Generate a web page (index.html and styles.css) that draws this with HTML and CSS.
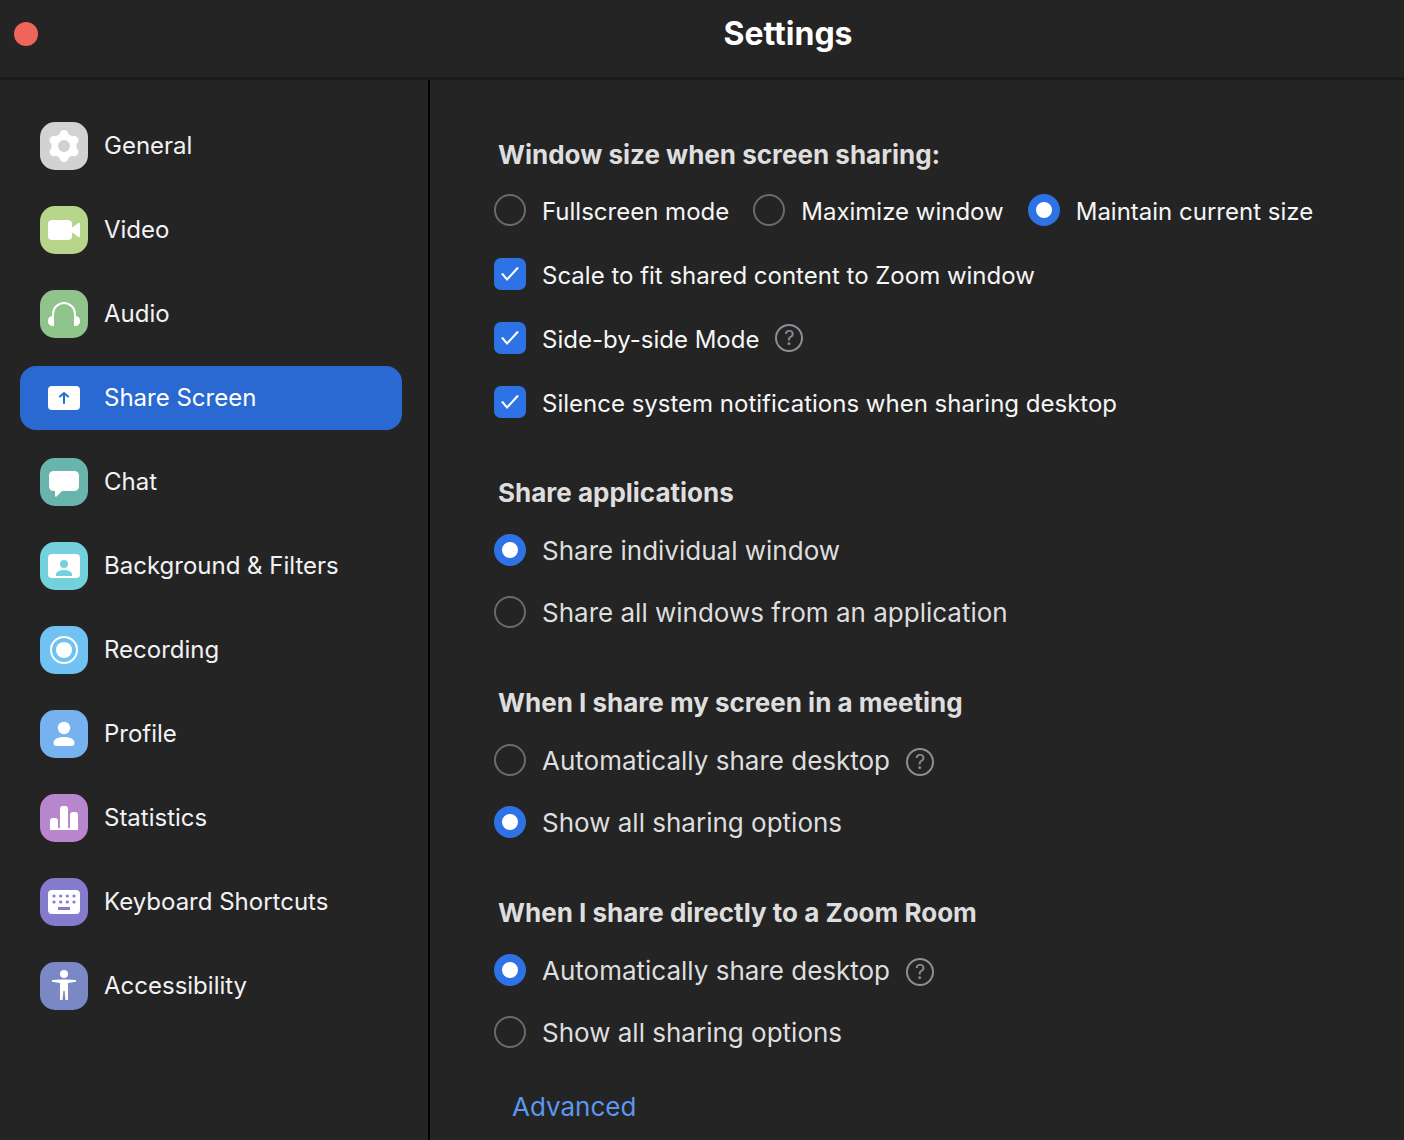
FILE: index.html
```html
<!DOCTYPE html>
<html lang="en">
<head>
<meta charset="utf-8">
<meta name="viewport" content="width=device-width, initial-scale=1">
<title>Settings</title>
<link rel="stylesheet" href="styles.css">
</head>
<body>
<header class="titlebar">
  <button class="close" type="button" aria-label="Close"></button>
  <h1 class="title">Settings</h1>
</header>
<div class="body">
  <nav class="sidebar" aria-label="Settings sections">
    <a class="nav-item" href="#general">
      <svg class="nav-icon general" viewBox="0 0 48 48" aria-hidden="true"><path fill="none" stroke="#fff" stroke-width="9" stroke-linecap="round" stroke-linejoin="round" d="M24 12.500V35.500M14 18.300L34 29.700M14 29.700L34 18.300"/><circle cx="24" cy="24" r="12.500" fill="#fff"/><circle cx="24" cy="24" r="6" fill="#d2d2d2"/></svg>
      <span>General</span>
    </a>
    <a class="nav-item" href="#video">
      <svg class="nav-icon video" viewBox="0 0 48 48" aria-hidden="true"><rect x="8" y="14" width="24" height="20" rx="4"/><path d="M32 21.500L38.500 17Q40 16.200 40 17.800V30.200Q40 31.800 38.500 31L32 26.500Z"/></svg>
      <span>Video</span>
    </a>
    <a class="nav-item" href="#audio">
      <svg class="nav-icon audio" viewBox="0 0 48 48" aria-hidden="true"><path fill="none" stroke="#fff" stroke-width="2" d="M13 28V24a11 11 0 0 1 22 0V28"/><path d="M14 26V36H12.500A4.500 4.500 0 0 1 8 31.500V30.500A4.500 4.500 0 0 1 12.500 26ZM34 26V36H35.500A4.500 4.500 0 0 0 40 31.500V30.500A4.500 4.500 0 0 0 35.500 26Z"/></svg>
      <span>Audio</span>
    </a>
    <a class="nav-item selected" href="#share-screen" aria-current="page">
      <svg class="nav-icon" viewBox="0 0 48 48" aria-hidden="true"><rect x="8" y="12" width="32" height="24" rx="4"/><path fill="none" stroke="#2a69d2" stroke-width="2" stroke-linecap="round" stroke-linejoin="round" d="M24 29V19M20 22.500L24 19L28 22.500"/></svg>
      <span>Share Screen</span>
    </a>
    <a class="nav-item" href="#chat">
      <svg class="nav-icon chat" viewBox="0 0 48 48" aria-hidden="true"><path d="M14 13H34Q39 13 39 18V28Q39 33 34 33H22L16.500 38.500Q15 39.500 15 37.500V33H14Q9 33 9 28V18Q9 13 14 13Z"/></svg>
      <span>Chat</span>
    </a>
    <a class="nav-item" href="#background">
      <svg class="nav-icon background" viewBox="0 0 48 48" aria-hidden="true"><rect x="8" y="12" width="32" height="24" rx="4"/><circle cx="24" cy="22" r="4" fill="#73d1de"/><path fill="#73d1de" d="M16 34V32.500C16 29.500 20 28 24 28S32 29.500 32 32.500V34Z"/></svg>
      <span>Background &amp; Filters</span>
    </a>
    <a class="nav-item" href="#recording">
      <svg class="nav-icon recording" viewBox="0 0 48 48" aria-hidden="true"><circle cx="24" cy="24" r="13" fill="none" stroke="#fff" stroke-width="2"/><circle cx="24" cy="24" r="8"/></svg>
      <span>Recording</span>
    </a>
    <a class="nav-item" href="#profile">
      <svg class="nav-icon profile" viewBox="0 0 48 48" aria-hidden="true"><circle cx="24" cy="18" r="6.200"/><path d="M13.500 33C13.500 29 18 27 24 27S34.500 29 34.500 33Q34.500 36 31.500 36H16.500Q13.500 36 13.500 33Z"/></svg>
      <span>Profile</span>
    </a>
    <a class="nav-item" href="#statistics">
      <svg class="nav-icon statistics" viewBox="0 0 48 48" aria-hidden="true"><path d="M10 36V27Q10 24 13 24H15Q18 24 18 27V34H20V15Q20 12 23 12H25Q28 12 28 15V34H30V21Q30 18 33 18H35Q38 18 38 21V36Z"/></svg>
      <span>Statistics</span>
    </a>
    <a class="nav-item" href="#shortcuts">
      <svg class="nav-icon shortcuts" viewBox="0 0 48 48" aria-hidden="true"><rect x="8" y="12" width="32" height="24" rx="4"/><path fill="none" stroke="#857bcd" stroke-width="3.200" stroke-linecap="round" d="M14 18h.01M20.700 18h.01M27.300 18h.01M34 18h.01M14 24h.01M20.700 24h.01M27.300 24h.01M34 24h.01"/><rect x="18" y="29" width="12" height="3" fill="#857bcd"/></svg>
      <span>Keyboard Shortcuts</span>
    </a>
    <a class="nav-item" href="#accessibility">
      <svg class="nav-icon accessibility" viewBox="0 0 48 48" aria-hidden="true"><circle cx="24" cy="12" r="4"/><path d="M12 18L22 17.500H26L36 18V19.700L28 21V38H25.500L24.600 29H23.400L22.500 38H20V21L12 19.700Z"/></svg>
      <span>Accessibility</span>
    </a>
  </nav>
  <main class="content">
    <section class="group primary">
      <h2 class="heading">Window size when screen sharing:</h2>
      <div class="options">
        <div class="choices">
          <label class="option"><input class="radio" type="radio" name="size"><span>Fullscreen mode</span></label>
          <label class="option"><input class="radio" type="radio" name="size"><span>Maximize window</span></label>
          <label class="option"><input class="radio" type="radio" name="size" checked><span>Maintain current size</span></label>
        </div>
        <label class="option"><input class="check" type="checkbox" checked><span>Scale to fit shared content to Zoom window</span></label>
        <div class="row">
          <label class="option"><input class="check" type="checkbox" checked><span>Side-by-side Mode</span></label>
          <button class="help" type="button" aria-label="About side-by-side mode">?</button>
        </div>
        <label class="option"><input class="check" type="checkbox" checked><span>Silence system notifications when sharing desktop</span></label>
      </div>
    </section>
    <section class="group">
      <h2 class="heading">Share applications</h2>
      <div class="options">
        <label class="option"><input class="radio" type="radio" name="apps" checked><span>Share individual window</span></label>
        <label class="option"><input class="radio" type="radio" name="apps"><span>Share all windows from an application</span></label>
      </div>
    </section>
    <section class="group">
      <h2 class="heading">When I share my screen in a meeting</h2>
      <div class="options">
        <div class="row">
          <label class="option"><input class="radio" type="radio" name="meeting"><span>Automatically share desktop</span></label>
          <button class="help" type="button" aria-label="About sharing in a meeting">?</button>
        </div>
        <label class="option"><input class="radio" type="radio" name="meeting" checked><span>Show all sharing options</span></label>
      </div>
    </section>
    <section class="group">
      <h2 class="heading">When I share directly to a Zoom Room</h2>
      <div class="options">
        <div class="row">
          <label class="option"><input class="radio" type="radio" name="room" checked><span>Automatically share desktop</span></label>
          <button class="help" type="button" aria-label="About sharing to a Zoom Room">?</button>
        </div>
        <label class="option"><input class="radio" type="radio" name="room"><span>Show all sharing options</span></label>
      </div>
    </section>
    <a class="advanced" href="#advanced">Advanced</a>
  </main>
</div>
</body>
</html>
```
FILE: styles.css
```css
* { box-sizing: border-box; }

body {
  margin: 0;
  min-height: 100vh;
  display: flex;
  flex-direction: column;
  background: #242424;
  color: #f4f4f4;
  font-family: Inter, "Liberation Sans", sans-serif;
  font-size: 24px;
  line-height: 32px;
}

.titlebar {
  display: grid;
  grid-template-columns: 172px 1fr;
  align-items: center;
  padding: 0 0 9px 0;
  height: 80px;
  border-bottom: 3px solid #1b1b1b;
}

.close {
  width: 24px;
  height: 24px;
  margin-left: 14px;
  padding: 0;
  border: 0;
  border-radius: 50%;
  background: #ee6559;
}

.title {
  margin: 0;
  text-align: center;
  font-size: 32px;
  line-height: 40px;
  font-weight: 700;
  color: #fff;
}

.body {
  flex: 1;
  display: flex;
}

.sidebar {
  flex: 0 0 430px;
  display: flex;
  flex-direction: column;
  gap: 20px;
  padding: 34px 26px 34px 20px;
  border-right: 2px solid #000;
}

.nav-item {
  display: flex;
  align-items: center;
  gap: 16px;
  height: 64px;
  padding: 0 20px;
  border-radius: 16px;
  color: #f2f2f4;
  text-decoration: none;
}

.selected { background: #2a69d2; color: #fff; }

.nav-icon {
  flex: none;
  width: 48px;
  height: 48px;
  border-radius: 15px;
  fill: #fff;
}

.general { background: #d2d2d2; }
.video { background: #b7d68c; }
.audio { background: #90c48c; }
.chat { background: #6ab4ae; }
.background { background: #73d1de; }
.recording { background: #71c2f3; }
.profile { background: #76b2f0; }
.statistics { background: #b886cd; }
.shortcuts { background: #857bcd; }
.accessibility { background: #7a88c6; }

.content {
  flex: 1;
  min-width: 0;
  display: flex;
  flex-direction: column;
  gap: 59px;
  padding: 59px 24px 0 64px;
}

.group {
  display: flex;
  flex-direction: column;
  gap: 25px;
  font-size: 26px;
  color: #dedede;
}

.options {
  display: flex;
  flex-direction: column;
  align-items: flex-start;
  gap: 30px;
}

.primary { gap: 23px; font-size: 24px; color: #f6f6f6; }
.primary .options { gap: 32px; }

.heading {
  margin: 0 0 0 4px;
  font-size: 26px;
  line-height: 32px;
  font-weight: 700;
  color: #dedede;
}

.choices { display: flex; flex-wrap: wrap; gap: 24px; }
.row { display: flex; align-items: center; gap: 16px; }
.option { display: flex; align-items: center; gap: 16px; }
.option span { padding-top: 2px; line-height: 30px; }
.primary .option span { padding-top: 4px; line-height: 28px; }

.radio, .check {
  appearance: none;
  flex: none;
  width: 32px;
  height: 32px;
  margin: 0;
}

.radio { border: 2px solid #6b6b6b; border-radius: 50%; }
.radio:checked { border: 8px solid #2e73e6; background: #fff; }

.check {
  display: grid;
  place-items: center;
  border-radius: 7px;
  background: #2e73e6;
}

.check:checked::before {
  content: "";
  width: 20px;
  height: 16px;
  background: #fff;
  clip-path: polygon(1px 8px, 3px 7px, 7px 12px, 17px 1px, 19px 2px, 7px 15px);
}

.help {
  width: 28px;
  height: 28px;
  margin-top: 4px;
  padding: 0;
  border: 2px solid #8f8c96;
  border-radius: 50%;
  background: none;
  color: #8f8c96;
  font-family: inherit;
  font-size: 20px;
  line-height: 24px;
}

.primary .help { margin-top: 0; }

.advanced {
  align-self: flex-start;
  margin: -16px 0 16px 18px;
  font-size: 26px;
  color: #5b97ee;
  text-decoration: none;
}
```
